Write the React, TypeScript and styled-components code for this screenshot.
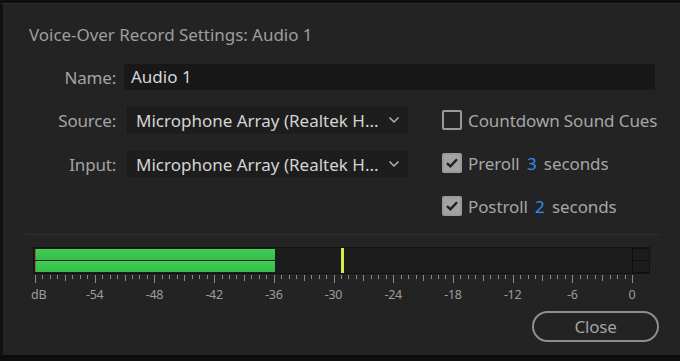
import styled, { createGlobalStyle } from "styled-components";

const GlobalStyle = createGlobalStyle`
  html, body {
    margin: 0;
    padding: 0;
    background: #0e0e0e;
  }
  body {
    font-family: "Noto Sans", "Open Sans", sans-serif;
    width: 680px;
    height: 361px;
    overflow: hidden;
  }
`;

const MIN_DB = -60;
const METER_LEFT = 2;
const PX_PER_DB = 9.95;
const labels = ["dB", "-54", "-48", "-42", "-36", "-30", "-24", "-18", "-12", "-6", "0"];

const xFor = (db: number) => METER_LEFT + (db - MIN_DB) * PX_PER_DB;

const Chevron = () => (
    <svg width="12" height="8" viewBox="0 0 12 8">
        <path d="M1.5 1.5 L6 6 L10.5 1.5" fill="none" stroke="#b4b4b4" strokeWidth="1.5" />
    </svg>
);

const Check = () => (
    <svg width="14" height="12" viewBox="0 0 14 12">
        <path d="M2 6.2 L5.4 9.4 L12 2.2" fill="none" stroke="#1e1e1e" strokeWidth="2.4" />
    </svg>
);

const Select = ({value}: {value: string}) => (
    <StyledSelect>
        <span>{value}</span>
        <Chevron/>
    </StyledSelect>
);

const CheckOption = ({checked, children}: {checked?: boolean, children: React.ReactNode}) => (
    <Option>
        <Box $checked={checked}>{checked && <Check/>}</Box>
        <OptionText>{children}</OptionText>
    </Option>
);

const Meter = () => {
    const ticks = [];
    for (let i = 0; i <= 80; i++) {
        const db = MIN_DB + i * 0.75;
        const major = i % 8 === 0;
        const mid = i % 4 === 0;
        ticks.push(
            <Tick key={i} $h={major ? 8 : mid ? 6 : 4} style={{left: xFor(db)}}/>
        );
    }
    return (
        <MeterArea>
            <MeterFrame>
                <Channel>
                    <Fill style={{width: xFor(-36) - 2}}/>
                    <ClipBox/>
                </Channel>
                <Channel>
                    <Fill style={{width: xFor(-36) - 2}}/>
                    <ClipBox/>
                </Channel>
                <Peak style={{left: xFor(-29.3)}}/>
            </MeterFrame>
            <Scale>
                {ticks}
                {labels.map((l, i) => (
                    <ScaleLabel key={l} style={{left: xFor(MIN_DB + i * 6)}}>{l}</ScaleLabel>
                ))}
            </Scale>
        </MeterArea>
    );
};

export default function App() {
    return (
        <>
            <GlobalStyle/>
            <Dialog>
                <Title>Voice-Over Record Settings: Audio 1</Title>
                <NameRow>
                    <Label>Name:</Label>
                    <TextField>Audio 1</TextField>
                </NameRow>
                <Body>
                    <Fields>
                        <Row>
                            <Label>Source:</Label>
                            <Select value="Microphone Array (Realtek H..."/>
                        </Row>
                        <Row>
                            <Label>Input:</Label>
                            <Select value="Microphone Array (Realtek H..."/>
                        </Row>
                    </Fields>
                    <Options>
                        <CheckOption>Countdown Sound Cues</CheckOption>
                        <CheckOption checked>Preroll <Num>3</Num> seconds</CheckOption>
                        <CheckOption checked>Postroll <Num>2</Num> seconds</CheckOption>
                    </Options>
                </Body>
                <Divider/>
                <Meter/>
                <Footer>
                    <CloseButton>Close</CloseButton>
                </Footer>
            </Dialog>
        </>
    );
}

const Dialog = styled.div`
    margin-top: 3px;
    height: 351px;
    background: #232323;
    border-top: 1px solid #2c2c2c;
    border-left: 3px solid #111;
    border-bottom: 2px solid #0a0a0a;
    display: flex;
    flex-direction: column;
    color: #a6a6a6;
    font-size: 17px;
`

const Title = styled.div`
    padding: 20px 0 0 26px;
    height: 22px;
    line-height: 22px;
    color: #9e9e9e;
    letter-spacing: -0.05px;
`

const NameRow = styled.div`
    display: flex;
    align-items: center;
    margin-top: 18px;
    height: 26px;
`

const Label = styled.div`
    width: 113px;
    text-align: right;
    padding-right: 8px;
    color: #a4a4a4;
    letter-spacing: -0.2px;
`

const TextField = styled.div`
    width: 524px;
    height: 26px;
    line-height: 26px;
    background: #181818;
    padding-left: 7px;
    color: #d6d6d6;
`

const Body = styled.div`
    display: flex;
    margin-top: 15px;
`

const Fields = styled.div`
    display: flex;
    flex-direction: column;
    gap: 14px;
    width: 440px;
`

const Row = styled.div`
    display: flex;
    align-items: center;
    height: 30px;
`

const StyledSelect = styled.div`
    width: 284px;
    height: 30px;
    box-sizing: border-box;
    display: flex;
    align-items: center;
    justify-content: space-between;
    padding: 0 8px 0 10px;
    margin-left: 1px;
    background: #1d1d1d;
    border: 1px solid #262626;
    color: #d4d4d4;
    white-space: nowrap;
`

const Options = styled.div`
    display: flex;
    flex-direction: column;
    gap: 21px;
    margin: 4px 0 0 -1px;
`

const Option = styled.div`
    display: flex;
    align-items: center;
    height: 22px;
    gap: 6px;
`

const Box = styled.div<{$checked?: boolean}>`
    width: 20px;
    height: 20px;
    box-sizing: border-box;
    border: 2px solid #9a9a9a;
    border-radius: 2px;
    background: ${p => p.$checked ? "#a3a3a3" : "transparent"};
    display: flex;
    align-items: center;
    justify-content: center;
`

const OptionText = styled.span`
    color: #a6a6a6;
    letter-spacing: -0.1px;
    white-space: nowrap;
`

const Num = styled.span`
    color: #2f8ff0;
    padding: 0 3px;
`

const Divider = styled.div`
    margin: 17px 21px 0 22px;
    height: 1px;
    background: #2f2f2f;
`

const MeterArea = styled.div`
    margin: 12px 0 0 30px;
    width: 620px;
`

const MeterFrame = styled.div`
    position: relative;
    width: 617px;
    height: 27px;
    box-sizing: border-box;
    border: 1px solid #121212;
    background: #1c1c1c;
    display: flex;
    flex-direction: column;
    justify-content: space-between;
    padding: 1px 0 1px 1px;
    gap: 1px;
`

const Channel = styled.div`
    flex: 1;
    display: flex;
    justify-content: space-between;
`

const Fill = styled.div`
    height: 100%;
    background: linear-gradient(#3fcf55, #35bd48);
    border-left: 1px solid #8a6a3a;
`

const ClipBox = styled.div`
    width: 16px;
    border: 1px solid #0f0f0f;
    border-right: none;
    margin-top: -1px;
    margin-bottom: -1px;
`

const Peak = styled.div`
    position: absolute;
    top: 0;
    bottom: 0;
    width: 3px;
    background: #d8ec4c;
`

const Scale = styled.div`
    position: relative;
    height: 31px;
    font-size: 12.5px;
    color: #9c9c9c;
`

const Tick = styled.div<{$h: number}>`
    position: absolute;
    top: 1px;
    width: 1px;
    height: ${p => p.$h}px;
    background: #8a8a8a;
`

const ScaleLabel = styled.span`
    position: absolute;
    top: 12px;
    transform: translateX(-50%);
    letter-spacing: -0.3px;
    &:first-of-type {
        transform: translateX(-4px);
    }
`

const Footer = styled.div`
    display: flex;
    justify-content: flex-end;
    padding: 6px 21px 0 0;
`

const CloseButton = styled.button`
    width: 127px;
    height: 31px;
    border-radius: 16px;
    border: 2px solid #8e8e8e;
    background: transparent;
    color: #a2a2a2;
    font-family: "Noto Sans", sans-serif;
    font-size: 17px;
    letter-spacing: -0.2px;
`
